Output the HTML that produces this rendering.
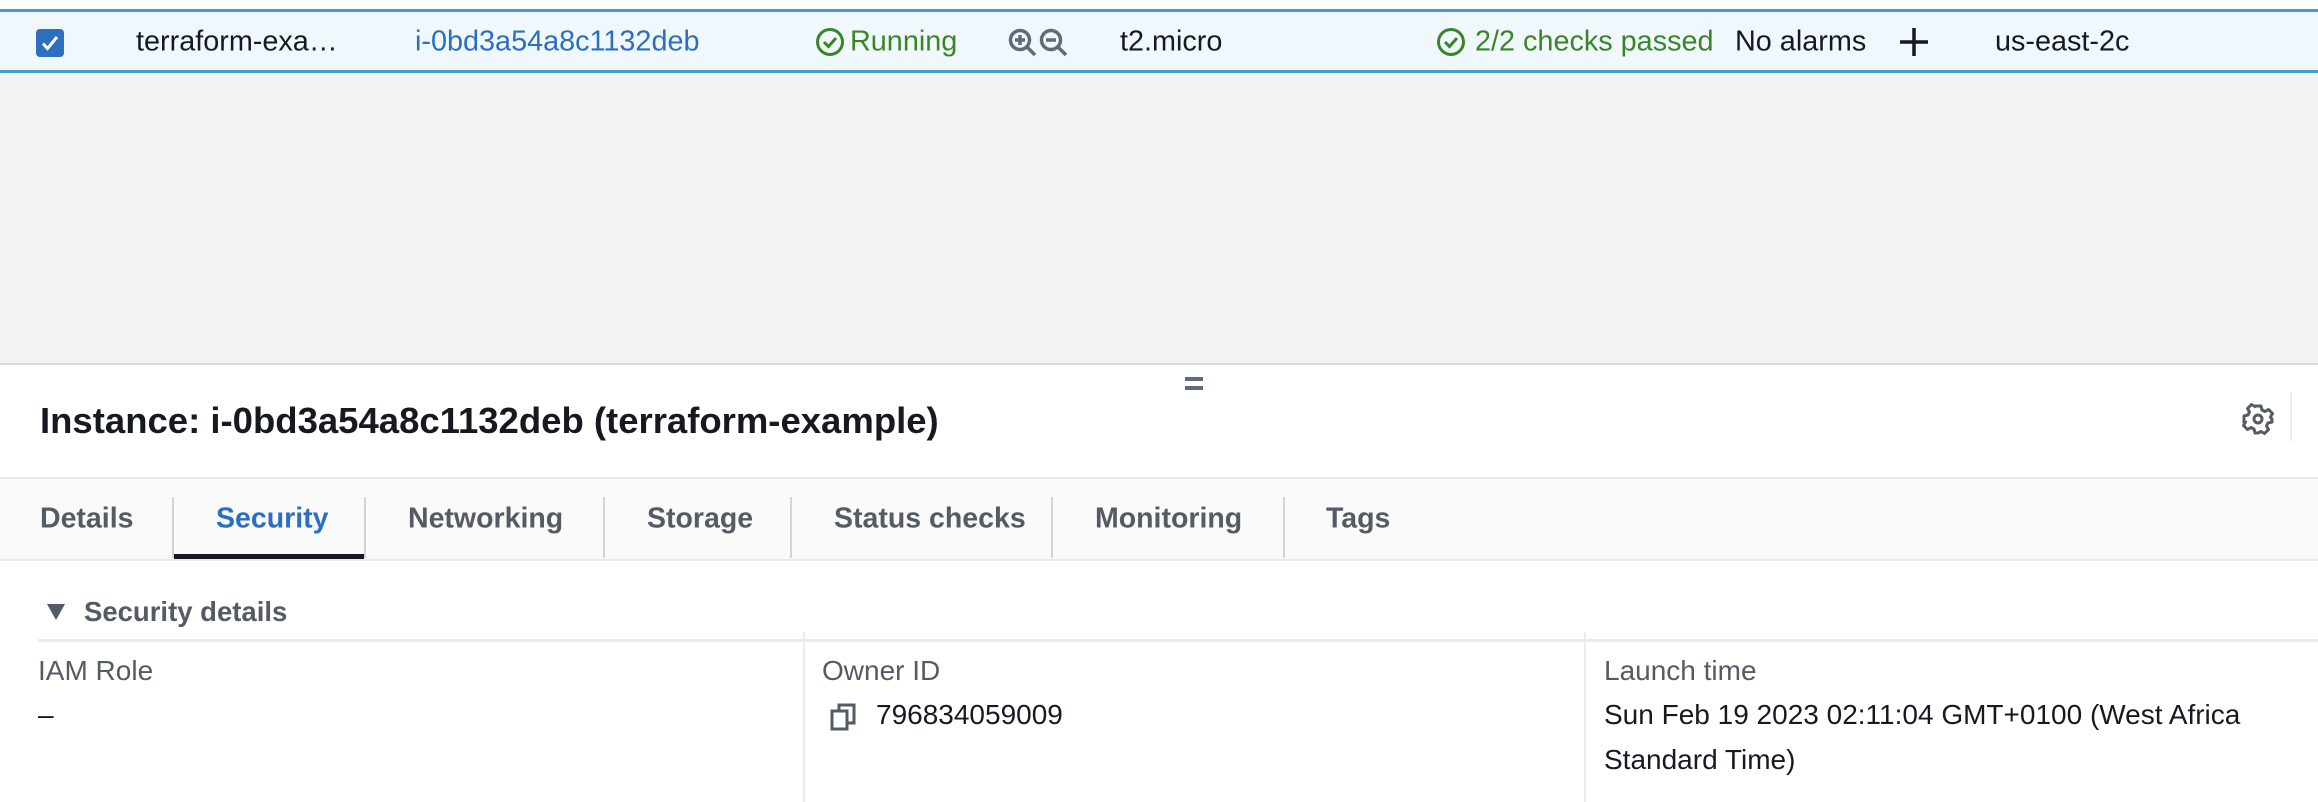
<!DOCTYPE html>
<html><head><meta charset="utf-8"><style>
*{margin:0;padding:0;box-sizing:border-box}
body{width:2318px;height:802px;position:relative;overflow:hidden;background:#fff;font-family:"Liberation Sans",sans-serif;color:#16191f}
.a{position:absolute;white-space:nowrap}
.row{position:absolute;left:0;top:9px;width:2318px;height:64px;background:#f1f8fd;border-top:3px solid #44a0c8;border-bottom:3px solid #44a0c8}
.rt{font-size:28.8px;top:42px;transform:translateY(-50%)}
.grey{position:absolute;left:0;top:73px;width:2318px;height:292px;background:#f2f3f3;border-bottom:2px solid #d5dbdb}
.tabs{position:absolute;left:0;top:477px;width:2318px;height:84px;background:#fafafa;border-top:2px solid #e9ebed;border-bottom:2px solid #e9ebed}
.tab{font-size:28.5px;font-weight:bold;color:#545b64;top:519px;transform:translateY(-50%)}
.sep{position:absolute;top:497px;width:2px;height:61px;background:#d1d5db}
.lbl{font-size:28px;color:#545b64}
.val{font-size:28px;color:#16191f}
</style></head><body>
<div class="row"></div>
<svg class="a" style="left:36px;top:29px" width="28" height="28"><rect width="28" height="28" rx="4" fill="#2f6fc0"/><path d="M7 14.5l4.5 5L21 8" stroke="#fff" stroke-width="3" fill="none"/></svg>
<div class="a rt" style="left:136px">terraform-exa…</div>
<div class="a rt" style="left:415px;color:#2a6fc0">i-0bd3a54a8c1132deb</div>
<svg class="a" style="left:815px;top:27px" width="30" height="30"><circle cx="15" cy="15" r="12.5" stroke="#3a8527" stroke-width="3" fill="none"/><path d="M9 15l4.5 4.5L21 11" stroke="#3a8527" stroke-width="3" fill="none"/></svg>
<div class="a rt" style="left:850px;color:#3a8527">Running</div>
<svg class="a" style="left:1008px;top:27px" width="64" height="32"><g stroke="#5f6b7a" stroke-width="3.5" fill="none"><circle cx="12" cy="13" r="9.5"/><path d="M19 20l8 8M7 13h10M12 8v10"/><circle cx="43" cy="13" r="9.5"/><path d="M50 20l8 8M38 13h10"/></g></svg>
<div class="a rt" style="left:1120px">t2.micro</div>
<svg class="a" style="left:1436px;top:27px" width="30" height="30"><circle cx="15" cy="15" r="12.5" stroke="#3a8527" stroke-width="3" fill="none"/><path d="M9 15l4.5 4.5L21 11" stroke="#3a8527" stroke-width="3" fill="none"/></svg>
<div class="a rt" style="left:1475px;color:#3a8527">2/2 checks passed</div>
<div class="a rt" style="left:1735px">No alarms</div>
<svg class="a" style="left:1900px;top:28px" width="28" height="28"><path d="M14 0v28M0 14h28" stroke="#16191f" stroke-width="3.5"/></svg>
<div class="a rt" style="left:1995px">us-east-2c</div>
<div class="grey"></div>
<div class="a" style="left:1185px;top:377px;width:18px;height:4px;background:#5f6b7a"></div>
<div class="a" style="left:1185px;top:386px;width:18px;height:4px;background:#5f6b7a"></div>
<div class="a" style="left:40px;top:421px;transform:translateY(-50%);font-size:36.5px;font-weight:bold">Instance: i-0bd3a54a8c1132deb (terraform-example)</div>
<svg class="a" style="left:2242px;top:403px" width="32" height="32" viewBox="0 0 32 32"><path d="M13 3h6l1 4 3 1.5 3.5-2 4 4-2 3.5L30 17v-1 3l-4 1-1.5 3 2 3.5-4 4-3.5-2L16 30h-3l-1-4-3-1.5-3.5 2-4-4 2-3.5L2 19v-6l4-1 1.5-3-2-3.5 4-4 3.5 2z" fill="none" stroke="#545b64" stroke-width="3" stroke-linejoin="round"/><circle cx="16" cy="16" r="4" fill="none" stroke="#545b64" stroke-width="3"/></svg>
<div class="a" style="left:2290px;top:393px;width:2px;height:48px;background:#e9ebed"></div>
<div class="tabs"></div>
<div class="a tab" style="left:40px">Details</div>
<div class="sep" style="left:172px"></div>
<div class="a tab" style="left:216px;color:#2a6fc0">Security</div>
<div class="a" style="left:174px;top:554px;width:190px;height:5px;background:#16191f"></div>
<div class="sep" style="left:364px"></div>
<div class="a tab" style="left:408px">Networking</div>
<div class="sep" style="left:603px"></div>
<div class="a tab" style="left:647px">Storage</div>
<div class="sep" style="left:790px"></div>
<div class="a tab" style="left:834px">Status checks</div>
<div class="sep" style="left:1051px"></div>
<div class="a tab" style="left:1095px">Monitoring</div>
<div class="sep" style="left:1283px"></div>
<div class="a tab" style="left:1326px">Tags</div>
<svg class="a" style="left:47px;top:604px" width="18" height="16"><path d="M0 0h18L9 16z" fill="#545b64"/></svg>
<div class="a" style="left:84px;top:612px;transform:translateY(-50%);font-size:27.5px;font-weight:bold;color:#545b64">Security details</div>
<div class="a" style="left:38px;top:639px;width:2280px;height:3px;background:#e9ebed"></div>
<div class="a" style="left:803px;top:632px;width:2px;height:170px;background:#e9ebed"></div>
<div class="a" style="left:1584px;top:632px;width:2px;height:170px;background:#e9ebed"></div>
<div class="a lbl" style="left:38px;top:671px;transform:translateY(-50%)">IAM Role</div>
<div class="a val" style="left:38px;top:715px;transform:translateY(-50%)">–</div>
<div class="a lbl" style="left:822px;top:671px;transform:translateY(-50%)">Owner ID</div>
<svg class="a" style="left:830px;top:703px" width="28" height="28"><g fill="none" stroke="#545b64" stroke-width="3"><rect x="2" y="8" width="15" height="18"/><path d="M9 8V2h15v18h-7"/></g></svg>
<div class="a val" style="left:876px;top:715px;transform:translateY(-50%)">796834059009</div>
<div class="a lbl" style="left:1604px;top:671px;transform:translateY(-50%)">Launch time</div>
<div class="a val" style="left:1604px;top:715px;transform:translateY(-50%)">Sun Feb 19 2023 02:11:04 GMT+0100 (West Africa</div>
<div class="a val" style="left:1604px;top:760px;transform:translateY(-50%)">Standard Time)</div>
</body></html>
